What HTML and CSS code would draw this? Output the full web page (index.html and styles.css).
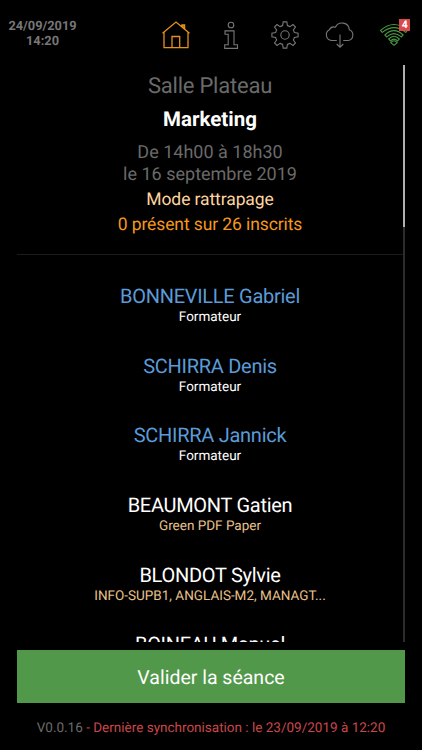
FILE: index.html
```html
<!DOCTYPE html>
<html lang="fr">
<head>
  <meta charset="UTF-8">
  <meta name="viewport" content="width=device-width, initial-scale=1.0">
  <title>Salle Plateau</title>
  <link rel="stylesheet" href="styles.css">
</head>
<body>
  <div class="app">
    <header class="topbar">
      <div class="clock">24/09/2019<br>14:20</div>
      <nav class="icons">
        <a class="icon home">
          <svg width="30" height="30" viewBox="0 0 30 30">
            <path d="M1.5 13.2 L15 2 L28.5 13.2 M3 12.2 V27.7 H27 V12.2 M11 27.7 V16.5 H18.7 V27.7"/>
            <path class="chimney" d="M20.3 5.8 L21 5 H23.6 V8.6 Z"/>
          </svg>
        </a>
        <a class="icon">
          <svg width="30" height="30" viewBox="0 0 30 30">
            <circle cx="15" cy="5" r="2.8"/>
            <path d="M9 10.9 H18 V24.8 H21.5 V28.4 H8.7 V24.8 H12.2 V14.3 H9 Z"/>
          </svg>
        </a>
        <a class="icon">
          <svg width="30" height="30" viewBox="0 0 30 30">
            <circle cx="15" cy="15" r="4.2"/>
            <path d="M12.6 5.6 L13.2 1.9 H16.8 L17.4 5.6 Q18.9 6 20 6.7 L23 4.5 L25.5 7 L23.3 10 Q24 11.1 24.4 12.6 L28.1 13.2 V16.8 L24.4 17.4 Q24 18.9 23.3 20 L25.5 23 L23 25.5 L20 23.3 Q18.9 24 17.4 24.4 L16.8 28.1 H13.2 L12.6 24.4 Q11.1 24 10 23.3 L7 25.5 L4.5 23 L6.7 20 Q6 18.9 5.6 17.4 L1.9 16.8 V13.2 L5.6 12.6 Q6 11.1 6.7 10 L4.5 7 L7 4.5 L10 6.7 Q11.1 6 12.6 5.6 Z"/>
          </svg>
        </a>
        <a class="icon">
          <svg width="30" height="30" viewBox="0 0 30 30">
            <path d="M11.8 20.5 H6.5 A5.7 5.7 0 0 1 4.4 9.8 A5 5 0 0 1 10.4 7.2 A7.3 7.3 0 0 1 24.3 9.8 A5.6 5.6 0 0 1 23.4 20.5 H18.2 M15 14.5 V27 M11.7 24 L15 27.2 L18.3 24"/>
          </svg>
        </a>
        <a class="icon wifi">
          <svg width="30" height="30" viewBox="0 0 30 30">
            <path d="M1.5 10.4 Q15 -1.4 28.5 10.4 L26.7 12.4 Q15 2.8 3.3 12.4 Z"/>
            <path d="M5.9 15 Q15 6.4 24.1 15 L22.3 16.9 Q15 10.2 7.7 16.9 Z"/>
            <path d="M9.7 19 Q15 13.6 20.3 19 L18.5 20.9 Q15 17.4 11.5 20.9 Z"/>
            <path d="M11.8 22.7 Q15 18.9 18.2 22.7 L15 25.4 Z"/>
          </svg>
          <span class="badge">4</span>
        </a>
      </nav>
    </header>

    <main class="content">
      <div class="list">
        <section class="session">
          <p class="room">Salle Plateau</p>
          <h1 class="course">Marketing</h1>
          <p class="time">De 14h00 à 18h30<br>le 16 septembre 2019</p>
          <p class="mode">Mode rattrapage</p>
          <p class="count">0 présent sur 26 inscrits</p>
        </section>
        <ul class="people">
          <li class="trainer"><span class="name">BONNEVILLE Gabriel</span><span class="info">Formateur</span></li>
          <li class="trainer"><span class="name">SCHIRRA Denis</span><span class="info">Formateur</span></li>
          <li class="trainer"><span class="name">SCHIRRA Jannick</span><span class="info">Formateur</span></li>
          <li><span class="name">BEAUMONT Gatien</span><span class="info">Green PDF Paper</span></li>
          <li><span class="name">BLONDOT Sylvie</span><span class="info">INFO-SUPB1, ANGLAIS-M2, MANAGT...</span></li>
          <li><span class="name">BOINEAU Manuel</span></li>
        </ul>
      </div>
      <div class="scrollbar"><div class="thumb"></div></div>
    </main>

    <button class="validate">Valider la séance</button>
    <footer class="footer">V0.0.16 <span class="sync">- Dernière synchronisation : le 23/09/2019 à 12:20</span></footer>
  </div>
</body>
</html>
```

FILE: styles.css
```css
* {
  box-sizing: border-box;
  margin: 0;
  padding: 0;
}

body {
  background: #000;
  color: #fff;
  font-family: Roboto, sans-serif;
  text-rendering: geometricPrecision;
}

.app {
  display: flex;
  flex-direction: column;
  width: 422px;
  height: 750px;
  overflow: hidden;
  text-align: center;
}

/* Top bar */
.topbar {
  display: flex;
  flex: 0 0 65px;
  padding-left: 8px;
}

.clock {
  width: 69px;
  padding-top: 19px;
  font-size: 12.8px;
  font-weight: 700;
  line-height: 15px;
  color: #777;
}

.icons {
  display: flex;
  gap: 24.6px;
  margin-left: 84px;
  padding-top: 20px;
}

.icon {
  position: relative;
  width: 30px;
  height: 30px;
}

.icon svg {
  display: block;
  fill: none;
  stroke: #777;
  stroke-width: 1.1;
}

.home svg {
  stroke: #e8901c;
  stroke-width: 1.3;
}

.home .chimney {
  fill: #a85a10;
}

.wifi svg {
  stroke: #479a40;
}

.badge {
  position: absolute;
  top: -1px;
  left: 20px;
  width: 11px;
  height: 12px;
  background: #d9484c;
  font-size: 10.5px;
  font-weight: 700;
  line-height: 12px;
}

/* Scrolling area */
.content {
  display: flex;
  flex: 0 0 577px;
  padding-left: 17px;
  overflow: hidden;
}

.list {
  width: 386px;
}

.session {
  height: 190px;
  padding-top: 9px;
  border-bottom: 1px solid #1c1c1c;
}

.room {
  font-size: 22px;
  line-height: 26px;
  letter-spacing: -0.22px;
  color: #6a6a6a;
}

.course {
  margin-top: 8px;
  font-size: 20.5px;
  line-height: 25px;
}

.time {
  margin-top: 9px;
  font-size: 18px;
  line-height: 22px;
  color: #6a6a6a;
}

.mode {
  margin-top: 3px;
  font-size: 17.5px;
  line-height: 22px;
  letter-spacing: -0.1px;
  color: #ffd5a0;
}

.count {
  margin-top: 3px;
  font-size: 17.5px;
  line-height: 22px;
  letter-spacing: -0.1px;
  color: #f5981d;
}

.people {
  padding-top: 29px;
  list-style: none;
}

.people li {
  height: 69.7px;
}

.name,
.info {
  display: block;
}

.name {
  font-size: 20px;
  line-height: 24px;
  letter-spacing: -0.28px;
}

.info {
  margin-top: 1px;
  font-size: 13.5px;
  line-height: 16px;
  color: #e9c08c;
}

.trainer .name {
  color: #5b9bd8;
}

.trainer .info {
  color: #fff;
}

.scrollbar {
  width: 2px;
  background: #2c2c2c;
}

.thumb {
  height: 162px;
  background: #b0b0b0;
}

/* Bottom */
.validate {
  flex: 0 0 53px;
  width: 388px;
  margin: 8px 0 0 17px;
  padding-top: 2px;
  border: none;
  background: #52984a;
  color: #fff;
  font-family: inherit;
  font-size: 19.5px;
  text-rendering: inherit;
}

.footer {
  padding-top: 17px;
  font-size: 13.5px;
  line-height: 16px;
  color: #6a6a6a;
}

.sync {
  color: #c9474a;
}
```
